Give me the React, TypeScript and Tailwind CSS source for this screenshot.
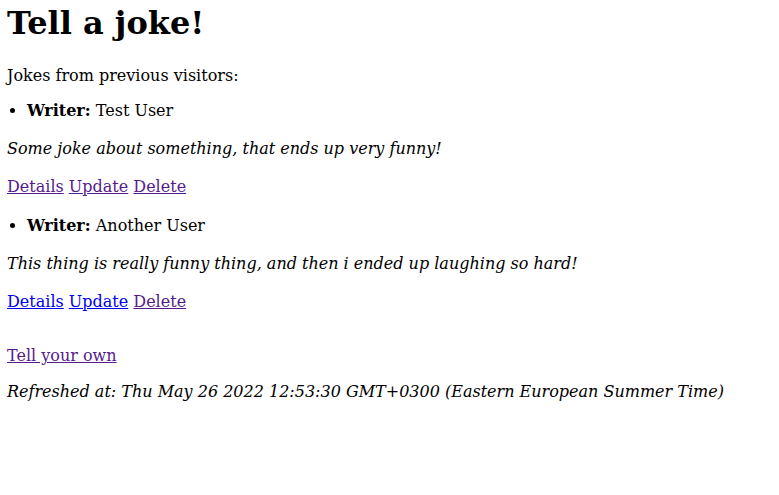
import React from "react";

const serif = { fontFamily: '"DejaVu Serif", serif' };

function Links({ blue }: { blue: boolean }) {
  const c1 = blue ? "text-[#0000ee]" : "text-[#551a8b]";
  return (
    <div className="mt-[19px] leading-[19px]">
      <a href="#" className={`${c1} underline`}>Details</a>{" "}
      <a href="#" className={`${c1} underline`}>Update</a>{" "}
      <a href="#" className="text-[#551a8b] underline">Delete</a>
    </div>
  );
}

function Joke({ writer, text, blue, first }: { writer: string; text: string; blue: boolean; first: boolean }) {
  return (
    <li className={first ? "mt-[16px]" : "mt-[20px]"}>
      <div className="flex items-center leading-[19px]">
        <span className="w-[20px] flex items-center">
          <span className="ml-[3px] inline-block w-[5px] h-[5px] rounded-full bg-black" />
        </span>
        <span>
          <b>Writer:</b> {writer}
        </span>
      </div>
      <div className="mt-[19px] leading-[19px] italic">{text}</div>
      <Links blue={blue} />
    </li>
  );
}

export default function App() {
  return (
    <div className="min-h-[495px] bg-white text-black text-[16px] pl-[7px] pr-[8px] pt-[5px]" style={serif}>
      <h1 className="text-[32px] font-bold leading-[37px]">Tell a joke!</h1>
      <div className="mt-[24px] leading-[19px]">Jokes from previous visitors:</div>
      <ul>
        <Joke first writer="Test User" text="Some joke about something, that ends up very funny!" blue={false} />
        <Joke
          first={false}
          writer="Another User"
          text="This thing is really funny thing, and then i ended up laughing so hard!"
          blue
        />
      </ul>
      <div className="mt-[35px] leading-[19px]">
        <a href="#" className="text-[#551a8b] underline">Tell your own</a>
      </div>
      <div className="mt-[17px] leading-[19px] italic">
        Refreshed at: Thu May 26 2022 12:53:30 GMT+0300 (Eastern European Summer Time)
      </div>
    </div>
  );
}
